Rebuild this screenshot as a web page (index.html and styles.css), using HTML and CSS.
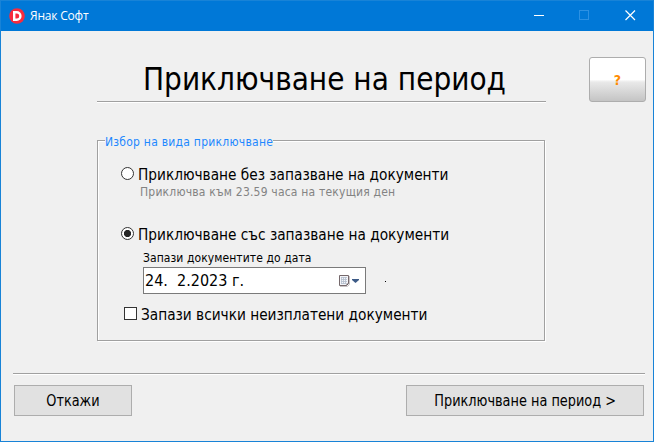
FILE: index.html
```html
<!DOCTYPE html>
<html lang="bg">
<head>
<meta charset="utf-8">
<title>Янак Софт</title>
<link rel="stylesheet" href="styles.css">
</head>
<body>
<div class="window">
  <header class="titlebar">
    <svg class="logo" width="16" height="16" viewBox="0 0 16 16"><circle cx="8" cy="8" r="7.8" fill="#f72c3e"/><path d="M5.200 4.300H7.700a3.700 3.700 0 0 1 0 7.400H5.200Z" fill="none" stroke="#fff" stroke-width="2.400"/></svg>
    <span class="app-name">Янак Софт</span>
    <svg class="controls" width="120" height="30" viewBox="0 0 120 30" fill="none" shape-rendering="crispEdges"><path d="M9 14.500h10" stroke="#fff"/><rect x="54.500" y="9.500" width="9" height="9" stroke="#2c91e3"/><path d="M100.500 9.500l9.500 9.500M110 9.500l-9.500 9.500" stroke="#fff" stroke-width="1.200" shape-rendering="auto"/></svg>
  </header>
  <main class="body">
    <div class="heading">
      <h1 class="title"><span class="t-title">Приключване на период</span></h1>
      <button class="help">?</button>
    </div>
    <section class="group">
      <h2 class="legend">Избор на вида приключване</h2>
      <label class="option"><i class="radio"></i><span class="narrow">Приключване без запазване на документи</span></label>
      <p class="hint">Приключва към 23.59 часа на текущия ден</p>
      <label class="option"><i class="radio checked"></i><span class="narrow">Приключване със запазване на документи</span></label>
      <p class="date-label">Запази документите до дата</p>
      <div class="date-row">
        <div class="date-field"><span>24.&nbsp; 2.2023 г.</span>
          <svg class="calendar" width="22" height="14" viewBox="0 0 22 14"><path d="M1.500 1.500v10h7l2-2v-8Z" fill="#f3f4f8" stroke="#75686b"/><path d="M2 12.500h7.500l2-2V2" fill="none" stroke="#c9c4c6"/><path d="M3 3.500h6M3 5.500h6M3 7.500h6M3 9.500h5M3.500 3v7M5.500 3v7M7.500 3v7" stroke="#b3bdcc" stroke-width=".8"/><path d="M8.500 12v-2.500H11Z" fill="#665b60"/><path d="M14 5h7v1l-3.500 3L14 6Z" fill="#3d5b87"/></svg>
        </div>
        <i class="dot"></i>
      </div>
      <label class="option check-row"><i class="checkbox"></i><span class="narrow">Запази всички неизплатени документи</span></label>
    </section>
    <footer class="footer">
      <button class="button cancel"><span class="narrow-center">Откажи</span></button>
      <button class="button next"><span class="narrow-center">Приключване на период &gt;</span></button>
    </footer>
  </main>
</div>
</body>
</html>
```
FILE: styles.css
```css
* { box-sizing: border-box; }
body { margin: 0; font-family: "DejaVu Sans Condensed", "DejaVu Sans", sans-serif; font-stretch: condensed; color: #000; white-space: nowrap; }
h1, h2, p { margin: 0; font-weight: normal; }
svg { display: block; flex: none; }
span { display: inline-block; }
.window { width: 654px; height: 442px; border: 1px solid #1883d7; border-top: 0; background: #f0f0f0; overflow: hidden; }
.titlebar { height: 31px; display: flex; align-items: center; padding-left: 8px; background: #0078d7; border-top: 1px solid #1883d7; color: #fff; }
.app-name { margin-left: 5px; font: 12px/16px "Open Sans", "Noto Sans", sans-serif; letter-spacing: -.2px; }
.controls { margin-left: auto; margin-right: 8px; }
.body { padding: 0 8px 0 12px; }
.heading { height: 109px; display: flex; padding-top: 26px; padding-left: 84px; }
.title { width: 449px; height: 45px; flex: none; padding: 2px 0 0 46px; border-bottom: 1px solid #a0a0a0; box-shadow: 0 1px #fff; font-size: 32px; line-height: 40px; }
.t-title { transform: scaleX(.974); transform-origin: left; }
.help { width: 57px; height: 45px; margin-left: 43px; padding: 0; flex: none; border: 1px solid #adadad; border-radius: 3px; background: linear-gradient(#fff 0, #fff 50%, #e9e9e9 56%, #c4c4c4 100%); color: #ff8c00; font: bold 14px/20px "DejaVu Sans Condensed", "DejaVu Sans", sans-serif; font-stretch: condensed; }
.group { width: 448px; height: 201px; margin: 0 0 0 84px; padding: 0 0 0 23px; border: 1px solid #a0a0a0; box-shadow: 1px 1px #fff, inset 1px 1px #fff; }
.legend { width: max-content; height: 16px; margin: -7px 0 0 -16px; font-size: 12px; line-height: 16px; letter-spacing: .25px; color: #1e88ff; background: #f0f0f0; }
.option { display: flex; align-items: flex-start; height: 20px; font-size: 16px; line-height: 21px; }
.legend + .option { margin-top: 14px; }
.narrow { transform: scaleX(.952); transform-origin: left; }
.narrow-center { transform: scaleX(.955); }
.radio { width: 13px; height: 13px; flex: none; margin: 3px 4px 0 0; border: 1px solid #333; border-radius: 50%; background: #fff; }
.checked { background: radial-gradient(circle, #262626 0 3.2px, #fff 4px); }
.hint { height: 16px; padding-left: 19px; font-size: 12px; line-height: 16px; letter-spacing: .2px; color: #838383; }
.hint + .option { margin-top: 24px; }
.date-label { height: 16px; margin-top: 6px; padding-left: 22px; font-size: 12px; line-height: 16px; letter-spacing: .08px; }
.date-row { display: flex; margin: 1px 0 0 22px; }
.date-field { display: flex; align-items: center; width: 223px; height: 27px; padding: 0 5px 0 1px; border: 1px solid #7a7a7a; background: #fff; font-size: 16px; line-height: 20px; }
.calendar { margin-left: auto; }
.dot { width: 1px; height: 1px; margin: 14px 0 0 19px; background: #000; }
.check-row { margin: 10px 0 0 3px; }
.checkbox { width: 13px; height: 13px; flex: none; margin: 3px 4px 0 0; border: 1px solid #333; background: #fff; }
.footer { display: flex; justify-content: space-between; height: 44px; margin-top: 32px; padding: 11px 1px 0; border-top: 1px solid #a0a0a0; box-shadow: inset 0 1px #fff; }
.button { height: 31px; padding: 0; border: 1px solid #adadad; background: #e1e1e1; color: #000; font: inherit; font-size: 15px; line-height: 20px; }
.cancel { width: 118px; }
.next { width: 238px; }
```
